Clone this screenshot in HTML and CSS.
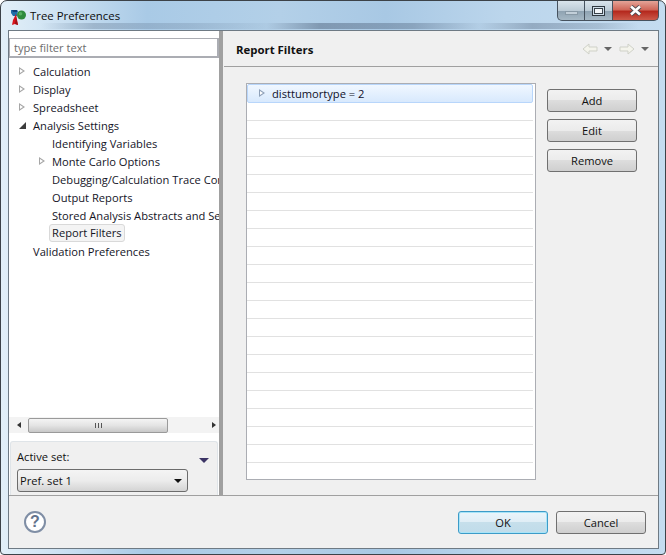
FILE: index.html
```html
<!DOCTYPE html>
<html>
<head>
<meta charset="utf-8">
<title>Tree Preferences</title>
<link rel="stylesheet" href="styles.css">
</head>
<body>
<div class="window">
  <div class="titlebar">
    <svg class="app-icon" width="17" height="17" viewBox="0 0 17 17">
      <path d="M1 1h6l1 1-1 5H3L1 4z" fill="#1f6fa8"/>
      <path d="M2 1h5v2H3z" fill="#0f3f78"/>
      <path d="M6 5l2 11-3-1-3 1 1-5z" fill="#d8141c"/>
      <path d="M6 8l2 8-3-1z" fill="#9c0f14"/>
      <circle cx="11.5" cy="6" r="4.5" fill="#2e8b3c"/>
      <circle cx="10.5" cy="4.8" r="1.8" fill="#55b060"/>
    </svg>
    <span class="title">Tree Preferences</span>
    <div class="controls">
      <div class="ctl ctl-min"><span class="min-glyph"></span></div>
      <div class="ctl ctl-max"><span class="max-glyph"></span></div>
      <div class="ctl ctl-close">
        <svg width="15" height="11" viewBox="0 0 15 11"><path d="M3 1.5l9 8M12 1.5l-9 8" stroke="#4a4a50" stroke-width="4.4"/><path d="M3 1.5l9 8M12 1.5l-9 8" stroke="#fff" stroke-width="2.6"/></svg>
      </div>
    </div>
  </div>
  <div class="client">
    <div class="main">
      <aside class="left">
        <div class="filter-wrap"><input class="filter" placeholder="type filter text"></div>
        <div class="tree">
          <div class="row"><span class="tw closed"></span><span>Calculation</span></div>
          <div class="row"><span class="tw closed"></span><span>Display</span></div>
          <div class="row"><span class="tw closed"></span><span>Spreadsheet</span></div>
          <div class="row"><span class="tw open"></span><span>Analysis Settings</span></div>
          <div class="row sub"><span class="tw"></span><span>Identifying Variables</span></div>
          <div class="row sub"><span class="tw closed"></span><span>Monte Carlo Options</span></div>
          <div class="row sub"><span class="tw"></span><span>Debugging/Calculation Trace Configuration</span></div>
          <div class="row sub"><span class="tw"></span><span>Output Reports</span></div>
          <div class="row sub"><span class="tw"></span><span>Stored Analysis Abstracts and Settings</span></div>
          <div class="row sub"><span class="tw"></span><span class="sel">Report Filters</span></div>
          <div class="row"><span class="tw"></span><span>Validation Preferences</span></div>
        </div>
        <div class="hscroll">
          <span class="arrow-l"></span>
          <div class="track"><div class="thumb"><span class="grip"></span></div></div>
          <span class="arrow-r"></span>
        </div>
        <div class="active-set">
          <div class="as-head"><span>Active set:</span><span class="as-menu"></span></div>
          <div class="combo"><span>Pref. set 1</span><span class="combo-arrow"></span></div>
        </div>
      </aside>
      <div class="sash"></div>
      <section class="right">
        <header class="head">
          <h1>Report Filters</h1>
          <div class="nav">
            <svg width="16" height="12" viewBox="0 0 16 12"><path d="M1 6l6-5v3h8v4H7v3z" fill="#f4f4ec" stroke="#cfd1c8"/></svg>
            <span class="nav-drop"></span>
            <svg width="16" height="12" viewBox="0 0 16 12"><path d="M15 6L9 1v3H1v4h8v3z" fill="#f4f4ec" stroke="#cfd1c8"/></svg>
            <span class="nav-drop"></span>
          </div>
        </header>
        <div class="content">
          <div class="table" id="table">
            <div class="t-row t-sel"><span class="tw closed blue"></span><span>disttumortype = 2</span></div>
            <div class="t-row"></div><div class="t-row"></div><div class="t-row"></div><div class="t-row"></div>
            <div class="t-row"></div><div class="t-row"></div><div class="t-row"></div><div class="t-row"></div>
            <div class="t-row"></div><div class="t-row"></div><div class="t-row"></div><div class="t-row"></div>
            <div class="t-row"></div><div class="t-row"></div><div class="t-row"></div><div class="t-row"></div>
            <div class="t-row"></div><div class="t-row"></div><div class="t-row"></div><div class="t-row"></div>
            <div class="t-row"></div>
          </div>
          <div class="side-btns">
            <button class="btn">Add</button>
            <button class="btn">Edit</button>
            <button class="btn">Remove</button>
          </div>
        </div>
      </section>
    </div>
    <footer class="foot">
      <div class="help">?</div>
      <div class="foot-btns">
        <button class="btn btn-default">OK</button>
        <button class="btn">Cancel</button>
      </div>
    </footer>
  </div>
</div>
</body>
</html>
```
FILE: styles.css
```css
* { box-sizing: border-box; }
html, body { margin: 0; padding: 0; }
body { width: 666px; height: 555px; overflow: hidden; background: #fff; font: 11.15px "Open Sans", "Noto Sans", sans-serif; color: #111; }
.window {
  width: 666px; height: 555px; margin: 0; border: 1px solid #3c4248; border-radius: 7px 7px 4px 4px;
  background:
    linear-gradient(90deg, rgba(90,110,135,0) 6%, rgba(90,110,135,.32) 14%, rgba(90,110,135,.22) 28%, rgba(90,110,135,.05) 40%, rgba(90,110,135,.55) 48%, rgba(90,110,135,.42) 62%, rgba(90,110,135,.05) 72%, rgba(90,110,135,.42) 80%, rgba(90,110,135,.25) 90%, rgba(90,110,135,0) 96%) 0 22px / 100% 6px no-repeat,
    linear-gradient(90deg, #e2eff8 0, #cfe3f3 8%, #a9cae6 22%, #b3d0e8 42%, #a8c8e4 58%, #bcd6ec 76%, #c4dcf0 100%);
  display: flex; flex-direction: column; padding: 0 6px 5px 7px;
}
.titlebar { height: 29px; flex: none; display: flex; align-items: flex-start; }
.app-icon { margin: 8px 3px 0 2px; flex: none; }
.title { margin-top: 7px; color: #0c0c0c; font-size: 11.4px; }
.controls { margin-left: auto; margin-right: 0; display: flex; height: 20px; }
.ctl { height: 20px; display: flex; align-items: center; justify-content: center; border: 1px solid #46525e; border-top: 0; }
.ctl-min { width: 28px; border-radius: 0 0 0 5px; background: linear-gradient(#d9e4ec, #bccbd6 50%, #8fa3b2 55%, #a6b8c5); }
.ctl-max { width: 28px; border-left: 0; background: linear-gradient(#d9e4ec, #bccbd6 50%, #8fa3b2 55%, #a6b8c5); }
.ctl-close { width: 46px; border-left: 0; border-radius: 0 0 5px 0; background: linear-gradient(#e4a498, #d0685a 45%, #b5291e 55%, #cc5a4a); }
.min-glyph { width: 13px; height: 4px; margin-top: 4px; background: #c2cfd9; border: 1px solid #8899a6; }
.max-glyph { width: 13px; height: 10px; border: 1px solid #2f3840; background: #f2f6f9; box-shadow: inset 0 0 0 1px #cfdde8, inset 0 0 0 2px #39424a; }
.client { flex: 1; min-height: 0; display: flex; flex-direction: column; background: #f0f0f0; border: 1px solid #6e7a84; }
.main { flex: 1; min-height: 0; display: flex; }
.left { width: 210px; flex: none; display: flex; flex-direction: column; background: #fff; }
.filter-wrap { padding: 7px 0 0 0; flex: none; }
.filter { display: block; width: 210px; height: 20px; margin: 0; padding: 0 4px; border: 1px solid #abadb3; border-width: 1px 2px 2px 1px; font: 11.15px "Open Sans", "Noto Sans", sans-serif; background: #fff; outline: 0; }
.filter::placeholder { color: #6d6d6d; opacity: 1; }
.tree { flex: 1; min-height: 0; overflow: hidden; padding-top: 4px; }
.row { height: 18px; display: flex; align-items: center; white-space: nowrap; padding-left: 10px; color: #14141f; }
.row.sub { padding-left: 29px; }
.tw { width: 14px; flex: none; margin-right: 0; display: inline-block; height: 9px; position: relative; }
.closed::before { content: ""; position: absolute; left: 1px; top: 0; width: 0; height: 0; border: 4.5px solid transparent; border-left: 6px solid #a6a6a6; }
.closed::after { content: ""; position: absolute; left: 2px; top: 2px; width: 0; height: 0; border: 2.5px solid transparent; border-left: 3.5px solid #fff; }
.open::before { content: ""; position: absolute; left: 1px; top: 1px; width: 0; height: 0; border-bottom: 7px solid #3c3c3c; border-left: 7px solid transparent; }
.row > .tw { margin-right: 1px; margin-left: -1px; }
.row.sub > .tw { margin-left: 0; margin-right: 1px; width: 13px; }
.sel { background: #f4f4f4; border: 1px solid #d9d9d9; border-radius: 3px; padding: 0 2px; margin-left: -3px; line-height: 16px; }
.hscroll { flex: none; height: 16px; margin-bottom: 8px; background: #f3f3f3; display: flex; align-items: center; }
.arrow-l, .arrow-r { width: 0; height: 0; border: 3.5px solid transparent; flex: none; }
.arrow-l { border-right: 4px solid #333; margin-left: 5px; }
.arrow-r { border-left: 4px solid #333; margin-left: 3px; }
.track { flex: 1; height: 16px; padding: 1px 0 0 7px; }
.thumb { width: 140px; height: 15px; border: 1px solid #9a9a9a; border-radius: 2px; background: linear-gradient(#f4f4f4, #e4e4e4 50%, #c8c8c8); display: flex; align-items: center; justify-content: center; }
.grip { width: 7px; height: 5px; background: repeating-linear-gradient(90deg, #555 0 1px, transparent 1px 3px); }
.active-set { flex: none; height: 54px; margin: 0 1px; border: 1px solid #dfe4e8; border-bottom: 0; border-radius: 3px 3px 0 0; background: #f0f0f0; padding: 5px 0 0 6px; }
.as-head { display: flex; justify-content: space-between; align-items: center; height: 18px; padding-right: 8px; color: #111; }
.as-menu { width: 0; height: 0; border: 5px solid transparent; border-top: 5px solid #3b3465; border-bottom: 0; margin-top: 8px; }
.combo { width: 171px; height: 23px; margin-top: 4px; border: 1px solid #6c6c6c; border-radius: 3px; background: linear-gradient(#f4f4f4, #ececec 50%, #d4d4d4); display: flex; align-items: center; justify-content: space-between; padding: 0 4px 0 2px; }
.combo-arrow { width: 0; height: 0; border: 4px solid transparent; border-top: 4px solid #111; border-bottom: 0; margin-right: 1px; }
.sash { width: 4px; flex: none; background: #a0a0a0; }
.right { flex: 1; min-width: 0; display: flex; flex-direction: column; }
.head { height: 36px; flex: none; margin-left: 1px; border-bottom: 1px solid #a0a0a0; display: flex; align-items: center; justify-content: space-between; padding: 1px 8px 0 12px; background: #f0f0f0; }
.head h1 { margin: 0; font-size: 11.4px; font-weight: 700; color: #111; }
.nav { display: flex; align-items: center; padding-right: 1px; margin-top: -1px; }
.nav-drop { width: 0; height: 0; border: 4px solid transparent; border-top: 4px solid #666; border-bottom: 0; margin: 0 7px 0 6px; }
.nav-drop:last-child { margin-right: 0; }
.content { flex: 1; min-height: 0; display: flex; align-items: flex-start; padding: 16px 0 0 23px; }
.table { width: 290px; height: 397px; flex: none; border: 1px solid #abadb3; background: #fff; padding-top: 0; overflow: hidden; }
.t-row { height: 18px; border-bottom: 1px solid #e1e1e1; margin-right: 2px; display: flex; align-items: center; }
.t-sel { height: 19px; border: 1px solid #b8d6fb; border-radius: 2px; background: linear-gradient(#f0f7ff, #d8e9fd); padding-left: 10px; color: #10102a; }
.t-sel .tw { margin-right: 0; }
.blue::before { border-left-color: #8ea0b8; }
.side-btns { display: flex; flex-direction: column; gap: 7px; margin: 6px 0 0 11px; }
.btn { width: 90px; height: 23px; padding: 0; border: 1px solid #707070; border-radius: 3px; background: linear-gradient(#f2f2f2, #ebebeb 50%, #dddddd 50%, #cfcfcf); font: 11.15px "Open Sans", "Noto Sans", sans-serif; color: #111; }
.foot { height: 53px; flex: none; border-top: 1px solid #a0a0a0; background: #f0f0f0; display: flex; align-items: flex-start; justify-content: space-between; padding: 15px 12px 0 15px; }
.help { width: 22px; height: 22px; border: 2px solid #7f8ea5; border-radius: 50%; background: #fff; color: #63738c; font: 700 16px/18px "Liberation Sans", sans-serif; text-align: center; }
.foot-btns { display: flex; gap: 8px; }
.btn-default { border-color: #3c9bc8; box-shadow: inset 0 0 0 1px #a8e4f8; background: linear-gradient(#eaf5fb, #dfedf5 50%, #c6dfeb 50%, #c0dcea); }
```
